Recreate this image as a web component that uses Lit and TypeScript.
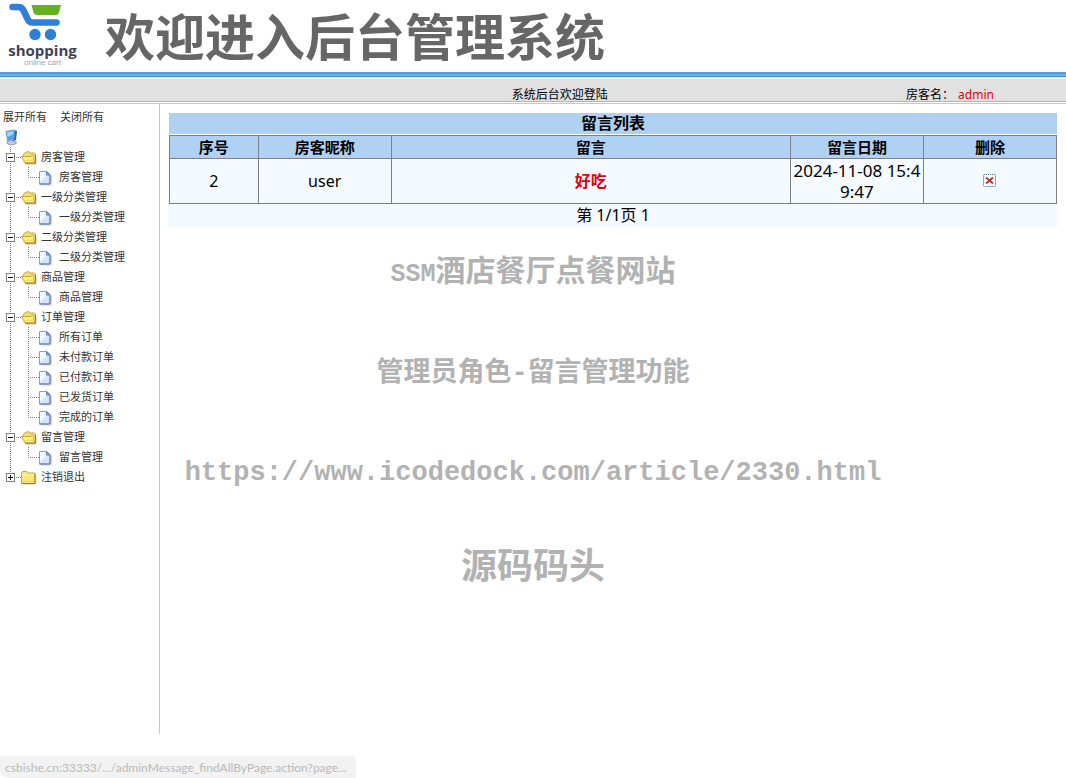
import { LitElement, html, css, svg } from "lit";
import { customElement, property, state } from "lit/decorators.js";

interface Group {
  name: string;
  items: string[];
}

interface Message {
  id: number;
  nickname: string;
  content: string;
  date: string;
}

const GROUPS: Group[] = [
  { name: "房客管理", items: ["房客管理"] },
  { name: "一级分类管理", items: ["一级分类管理"] },
  { name: "二级分类管理", items: ["二级分类管理"] },
  { name: "商品管理", items: ["商品管理"] },
  { name: "订单管理", items: ["所有订单", "未付款订单", "已付款订单", "已发货订单", "完成的订单"] },
  { name: "留言管理", items: ["留言管理"] },
  { name: "注销退出", items: ["注销退出"] },
];

const MESSAGES: Message[] = [
  { id: 2, nickname: "user", content: "好吃", date: "2024-11-08 15:49:47" },
];

const folderOpen = html`<svg class="cell" viewBox="0 0 18 20" aria-hidden="true">
  <path d="M4 17.500h11.500V10" fill="none" stroke="#e2dfd8"/>
  <path d="M2.500 11V7.500L4 5.500l3.500-1 1.500 1.500h4.500l1 1v8.500L5 16.500z" fill="#f7dd6a" stroke="#c4a445"/>
  <path d="M0.500 9.500h9l1.500-1h1.500l0.800 7.500H4z" fill="#fdf08e" stroke="#c9a63c"/>
  <path d="M14.500 8v8.200H4.500" fill="none" stroke="#a87d22"/>
  <path d="M3 13.500h9" stroke="#f6dc5c"/>
</svg>`;

const folderClosed = html`<svg class="cell" viewBox="0 0 18 20" aria-hidden="true">
  <path d="M1.500 17.500h13.500V8" fill="none" stroke="#e2dfd8"/>
  <path d="M0.500 16.500V6l1-1.500h4.500L7.500 6h6.500v10.500z" fill="#fbe679" stroke="#c4a445"/>
  <path d="M1 8h12.500" stroke="#fff6b8"/>
  <path d="M1 14.500h12.500" stroke="#f2cf4e"/>
  <path d="M14 7v9.500H1" fill="none" stroke="#a87d22"/>
</svg>`;

const page = html`<svg class="cell" viewBox="0 0 18 20" aria-hidden="true">
  <path d="M1.500 18h11V9" fill="none" stroke="#d2d2d6"/>
  <path d="M0.500 4.500h7.500l3 3v9.500h-10.500z" fill="#d3e6fd" stroke="#8b9fcb"/>
  <path d="M1 5h6v4L1 15z" fill="#f1f8ff"/>
  <path d="M7.500 4.500v3.500h3.500z" fill="#8aa8de" stroke="#6480bc"/>
  <path d="M11 8v9H0.500" fill="none" stroke="#5f75b0"/>
</svg>`;

const computer = html`<svg class="cell" viewBox="0 0 18 20" aria-hidden="true">
  <path d="M4 14.500l5-1 4.500 1.500-1 2-5 1-3.500-1.500z" fill="#c6c8dd" stroke="#9699bd"/>
  <path d="M11 3l3 1-1 9-3 1z" fill="#34589c"/>
  <path d="M3 4.500L11.500 3 11 12 4.500 13.500z" fill="#44a4ec" stroke="#6f9dd2"/>
  <path d="M4 5.200l6.500-1.200-0.500 3.500-5.500 2.500z" fill="#9bd8fd"/>
</svg>`;

@customElement("tree-line")
class TreeLine extends LitElement {
  @property() kind = "line";

  static styles = css`
    :host {
      display: block;
      width: 18px;
      height: 20px;
    }
    .line {
      display: block;
      width: 18px;
      height: 20px;
    }
    .dots {
      stroke: #808080;
      stroke-dasharray: 1 1;
      fill: none;
    }
  `;

  render() {
    const k = this.kind;
    const down = k === "line" || k === "join" || k === "minus";
    return html`<svg class="line" viewBox="0 0 18 20" aria-hidden="true">
      <path class="dots" d=${down ? "M7.500 0V20" : "M7.500 0V10"} />
      ${k === "line" ? "" : svg`<path class="dots" d="M7 10.500H18" />`}
      ${k === "minus" || k === "plus"
        ? svg`<rect x="3.500" y="6.500" width="8" height="8" fill="#fff" stroke="#808080" />
            <path d="M5 10.500h5" stroke="#000" />`
        : ""}
      ${k === "plus" ? svg`<path d="M7.500 8v5" stroke="#000" />` : ""}
    </svg>`;
  }
}

@customElement("side-tree")
class SideTree extends LitElement {
  @state() private open = GROUPS.map((_, i) => i < GROUPS.length - 1);

  static styles = css`
    :host {
      display: block;
      padding: 3px;
      font-size: 11px;
      line-height: 20px;
      color: #333;
    }
    .actions {
      display: flex;
      gap: 13px;
    }
    .action,
    .toggle {
      border: 0;
      padding: 0;
      background: none;
      font: inherit;
      color: inherit;
      cursor: pointer;
    }
    .list {
      list-style: none;
      margin: 0;
      padding: 0;
    }
    .row {
      display: flex;
      height: 20px;
    }
    .cell {
      display: block;
      width: 18px;
      height: 20px;
    }
    .link {
      padding-left: 2px;
      color: inherit;
      text-decoration: none;
      white-space: nowrap;
    }
  `;

  private setAll(value: boolean) {
    this.open = GROUPS.map(() => value);
  }

  private toggle(index: number) {
    this.open = this.open.map((v, i) => (i === index ? !v : v));
  }

  render() {
    const last = GROUPS.length - 1;
    return html`
      <div class="actions">
        <button class="action" @click=${() => this.setAll(true)}>展开所有</button>
        <button class="action" @click=${() => this.setAll(false)}>关闭所有</button>
      </div>
      <div class="row">${computer}</div>
      <ul class="list">
        ${GROUPS.map(
          (group, i) => html`<li>
            <div class="row">
              <button class="toggle" aria-label=${group.name} aria-expanded=${this.open[i]} @click=${() => this.toggle(i)}>
                <tree-line kind=${this.open[i] ? "minus" : "plus"}></tree-line>
              </button>
              ${this.open[i] ? folderOpen : folderClosed}
              <a class="link" href="#">${group.name}</a>
            </div>
            ${this.open[i]
              ? html`<ul class="list">
                  ${group.items.map(
                    (item, j) => html`<li class="row">
                      ${i < last ? html`<tree-line kind="line"></tree-line>` : html`<span class="cell"></span>`}
                      <tree-line kind=${j < group.items.length - 1 ? "join" : "end"}></tree-line>
                      ${page}
                      <a class="link" href="#">${item}</a>
                    </li>`
                  )}
                </ul>`
              : ""}
          </li>`
        )}
      </ul>
    `;
  }
}

@customElement("message-table")
class MessageTable extends LitElement {
  static styles = css`
    :host {
      display: block;
      font-size: 16px;
      line-height: 21px;
      color: #000;
    }
    .table {
      width: 100%;
      table-layout: fixed;
      border-collapse: collapse;
      background: #f5faff;
    }
    .caption {
      margin: 0 0 1px;
      background: #afd1f3;
      font-size: 16px;
      line-height: 21px;
      font-weight: bold;
      text-align: center;
    }
    .head,
    .data {
      box-sizing: border-box;
      border: 1px solid #7f7f88;
      padding: 1px 0;
      text-align: center;
      word-break: break-all;
    }
    .head {
      background: #afd1f3;
      font-size: 15px;
      line-height: 20px;
    }
    .narrow {
      width: 10%;
    }
    .medium {
      width: 15%;
    }
    .date {
      font-size: 17px;
    }
    .content {
      color: #e2000b;
      font-weight: bold;
    }
    .remove {
      border: 0;
      padding: 0;
      background: none;
      cursor: pointer;
    }
    .icon {
      display: block;
      width: 14px;
      height: 14px;
    }
    .pager {
      margin: 0 -1px;
      background: #f5faff;
      line-height: 23px;
      text-align: center;
    }
  `;

  render() {
    return html`
      <h2 class="caption">留言列表</h2>
      <table class="table" aria-label="留言列表">
        <thead>
          <tr>
            <th class="head narrow">序号</th>
            <th class="head medium">房客昵称</th>
            <th class="head">留言</th>
            <th class="head medium">留言日期</th>
            <th class="head medium">删除</th>
          </tr>
        </thead>
        <tbody>
          ${MESSAGES.map(
            (m) => html`<tr>
              <td class="data">${m.id}</td>
              <td class="data">${m.nickname}</td>
              <td class="data content">${m.content}</td>
              <td class="data date">${m.date}</td>
              <td class="data">
                <button class="remove" aria-label="删除">
                  <svg class="icon" viewBox="0 0 14 14" aria-hidden="true">
                    <rect x="0.500" y="1.500" width="12" height="12" rx="1" fill="#fff" stroke="#8ba6c9" />
                    <path d="M1 1.500h11" stroke="#fff" />
                    <path d="M1 1.500h11" stroke="#5878a8" stroke-dasharray="1 1" />
                    <path d="M3 4.500L10 10.500M10 4.500L3 10.500" stroke="#b4383e" stroke-width="2" />
                  </svg>
                </button>
              </td>
            </tr>`
          )}
        </tbody>
      </table>
      <div class="pager">第 1/1页 1</div>
    `;
  }
}

@customElement("app-root")
class AppRoot extends LitElement {
  static styles = css`
    :host {
      display: flex;
      flex-direction: column;
      position: relative;
      min-height: 100vh;
      box-sizing: border-box;
      padding-bottom: 44px;
      background: #fff;
      font-family: "Noto Sans", "Noto Sans CJK SC", sans-serif;
    }
    .banner {
      display: flex;
      align-items: flex-start;
      gap: 20px;
      height: 72px;
      padding-left: 9px;
    }
    .logo {
      display: flex;
      flex-direction: column;
      align-items: center;
      width: 67px;
      padding-top: 3px;
    }
    .cart {
      width: 67px;
      height: 38px;
    }
    .brand {
      font: bold 15px/18px "Open Sans", sans-serif;
      color: #3f4358;
    }
    .tagline {
      font: 8px/8px "Liberation Sans", sans-serif;
      color: #a3a3a3;
    }
    .title {
      margin: 0;
      padding-left: 9px;
      font: bold 50px/68px "Noto Sans CJK SC", sans-serif;
      color: #666;
      white-space: nowrap;
    }
    .stripe {
      height: 7px;
      background: linear-gradient(#5b9bd8 0 1px, #4f9be0 1px 2px, #68aeea 2px 4px, #4f94d0 4px 5px, #d5e8f5 5px 6px, #f4f8fa 6px);
    }
    .status {
      display: grid;
      grid-template-columns: 48% 37% 15%;
      height: 22px;
      background: #e1e1e1;
      border-bottom: 1px solid #b4b4b4;
      font-size: 12px;
      line-height: 31px;
      color: #000;
    }
    .welcome {
      grid-column: 2;
    }
    .account {
      display: flex;
      gap: 4px;
    }
    .user {
      color: #e2000b;
    }
    .body {
      display: flex;
      flex: 1;
      margin-top: 1px;
      border-top: 1px solid #c8c8c8;
    }
    .side {
      flex: none;
      width: 159px;
      border-right: 1px solid #c8c8c8;
    }
    .main {
      flex: 1;
      min-width: 0;
      padding: 9px 9px 0;
    }
    .watermark {
      position: absolute;
      inset: 248px 0 auto;
      display: flex;
      flex-direction: column;
      align-items: center;
      gap: 49px;
      pointer-events: none;
      color: #b2b2b2;
      font-family: "Liberation Mono", "Noto Sans CJK SC", monospace;
      font-weight: bold;
      line-height: 50px;
      white-space: nowrap;
    }
    .mark {
      margin: 0;
    }
    .mark-project {
      font-size: 30px;
    }
    .latin {
      font-size: 25px;
    }
    .mark-feature {
      font-size: 27px;
    }
    .mark-url {
      font-size: 27px;
    }
    .mark-author {
      font-size: 36px;
      line-height: 46px;
    }
    .hint {
      position: absolute;
      left: 0;
      bottom: 0;
      box-sizing: border-box;
      height: 22px;
      padding: 0 9px 0 5px;
      border-radius: 0 4px 0 8px;
      background: #f2f2f2;
      font: 12px/24px Lato, sans-serif;
      color: #bababa;
      white-space: nowrap;
    }
  `;

  render() {
    return html`
      <header>
        <div class="banner">
          <div class="logo">
            <svg class="cart" viewBox="0 0 67 38" aria-hidden="true">
              <path d="M22.500 2H52l-2 7.500q-0.800 2.500-3.500 2.500H28q-2.500 0-3.500-2.500z" fill="#62b221" />
              <path d="M3.500 4H9q4 0 5.500 3.500l4 8.500q1.500 3.500 5 3.500H47.500" fill="none" stroke="#2f7ed8" stroke-width="6.500" stroke-linecap="round" stroke-linejoin="round" />
              <circle cx="26" cy="31.500" r="5.700" fill="#2f7ed8" />
              <circle cx="41.500" cy="31.500" r="5.700" fill="#2f7ed8" />
            </svg>
            <span class="brand">shopping</span>
            <span class="tagline">online cart</span>
          </div>
          <h1 class="title">欢迎进入后台管理系统</h1>
        </div>
        <div class="stripe"></div>
        <div class="status">
          <span class="welcome">系统后台欢迎登陆</span>
          <span class="account"><span>房客名：</span><span class="user">admin</span></span>
        </div>
      </header>
      <div class="body">
        <nav class="side"><side-tree></side-tree></nav>
        <main class="main"><message-table></message-table></main>
      </div>
      <div class="watermark">
        <p class="mark mark-project"><span class="latin">SSM</span>酒店餐厅点餐网站</p>
        <p class="mark mark-feature">管理员角色-留言管理功能</p>
        <p class="mark mark-url">https://www.icodedock.com/article/2330.html</p>
        <p class="mark mark-author">源码码头</p>
      </div>
      <div class="hint">csbishe.cn:33333/.../adminMessage_findAllByPage.action?page...</div>
    `;
  }
}
